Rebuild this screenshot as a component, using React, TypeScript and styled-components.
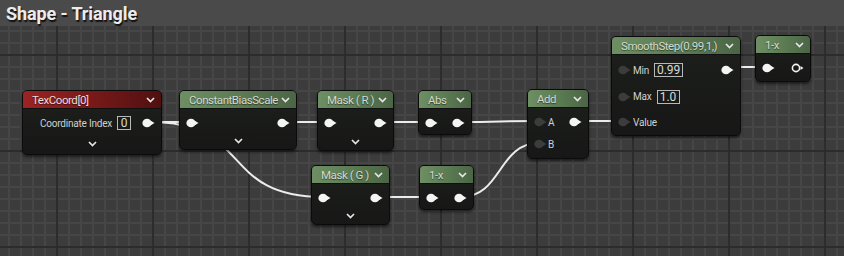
import { ReactNode } from "react";
import styled, { createGlobalStyle, css } from "styled-components";

const TOP = 26;

const GlobalStyle = createGlobalStyle`
  html, body {
    margin: 0;
    padding: 0;
    background: #3d3d3d;
  }
  body {
    font-family: Roboto, "Noto Sans", sans-serif;
  }
`;

const Page = styled.div`
  width: 844px;
  height: 256px;
  display: flex;
  flex-direction: column;
  overflow: hidden;
  background-color: #3c3c3c;
  background-image:
    linear-gradient(to right, #2c2c2c 2px, transparent 2px),
    linear-gradient(to bottom, #2c2c2c 2px, transparent 2px),
    linear-gradient(to right, #464646 2px, transparent 2px),
    linear-gradient(to bottom, #464646 2px, transparent 2px);
  background-size: 96px 96px, 96px 96px, 12px 12px, 12px 12px;
  background-position: 56px 0, 0 54px, 8px 0, 0 6px;
`;

const TitleBar = styled.div`
  height: ${TOP}px;
  flex-shrink: 0;
  display: flex;
  align-items: center;
  padding-left: 6px;
  background: #4a4a4a;
  color: #ececec;
  font-size: 18px;
  font-weight: 700;
  letter-spacing: -0.1px;
  text-shadow: 1px 2px 1px #111;
`;

const Canvas = styled.div`
  position: relative;
  flex: 1;
`;

const Wires = styled.svg`
  position: absolute;
  left: 0;
  top: 0;
`;

const NodeBox = styled.div<{ $x: number; $y: number; $w: number }>`
  position: absolute;
  left: ${({ $x }) => $x}px;
  top: ${({ $y }) => $y - TOP}px;
  width: ${({ $w }) => $w}px;
  box-sizing: border-box;
  border: 1px solid #0b0b0b;
  border-radius: 5px;
  background: linear-gradient(to bottom, #1e201d, #161716);
  box-shadow: 0 2px 3px rgba(0, 0, 0, 0.55);
  overflow: hidden;
  color: #d2d2d2;
  font-size: 10px;
  letter-spacing: -0.2px;
`;

const Header = styled.div<{ $red?: boolean }>`
  height: 17px;
  display: flex;
  align-items: center;
  justify-content: space-between;
  padding: 0 6px 0 9px;
  color: #d3d9d0;
  font-size: 11.5px;
  letter-spacing: -0.45px;
  white-space: nowrap;
  text-shadow: 0 1px 1px rgba(0, 0, 0, 0.5);
  border-bottom: 1px solid #101010;
  ${({ $red }) =>
    $red
      ? css`
          background: linear-gradient(to right, #9c2323, #751818 55%, #501010);
          color: #e6dede;
        `
      : css`
          background: linear-gradient(to right, #6e8f64, #5a7a52 55%, #4b6545);
        `}
`;

const Body = styled.div<{ $pt: number; $pb: number }>`
  display: flex;
  flex-direction: column;
  padding: ${({ $pt, $pb }) => `${$pt}px 0 ${$pb}px`};
`;

const Row = styled.div<{ $h: number }>`
  height: ${({ $h }) => $h}px;
  display: flex;
  align-items: center;
  padding: 0 5px 0 6px;
  white-space: nowrap;
`;

const Spacer = styled.div`
  flex: 1;
`;

const Label = styled.span<{ $ml?: number }>`
  margin-left: ${({ $ml }) => $ml ?? 0}px;
  color: #d0d0d0;
`;

const ValueBox = styled.span<{ $w: number }>`
  display: inline-flex;
  align-items: center;
  justify-content: center;
  box-sizing: border-box;
  width: ${({ $w }) => $w}px;
  height: 14px;
  margin-left: 5px;
  border: 1px solid #b8b8b8;
  color: #dadada;
  font-size: 12px;
  letter-spacing: 0;
`;

const Footer = styled.div<{ $h: number }>`
  height: ${({ $h }) => $h}px;
  display: flex;
  align-items: center;
  justify-content: center;
`;

const Chevron = ({ color = "#e6e6e6" }: { color?: string }) => (
  <svg width="9" height="6" viewBox="0 0 9 6">
    <polyline points="1,1 4.5,4.5 8,1" fill="none" stroke={color} strokeWidth="1.7" />
  </svg>
);

type PinKind = "on" | "off" | "ring";

const Pin = ({ kind = "on" }: { kind?: PinKind }) => {
  if (kind === "ring")
    return (
      <svg width="14" height="10" viewBox="0 0 14 10">
        <circle cx="5" cy="5" r="3.6" fill="none" stroke="#f2f2f2" strokeWidth="1.6" />
        <polygon points="9.5,3 12.5,5 9.5,7" fill="#f2f2f2" />
      </svg>
    );
  const fill = kind === "on" ? "#f4f4f4" : "#3c3c3c";
  return (
    <svg width="14" height="10" viewBox="0 0 14 10">
      <ellipse cx="5" cy="5" rx="4.6" ry="4.3" fill={fill} />
      <polygon points="8.5,2.5 12.5,5 8.5,7.5" fill={fill} />
    </svg>
  );
};

interface NodeProps {
  title: string;
  x: number;
  y: number;
  w: number;
  red?: boolean;
  pt?: number;
  pb?: number;
  footer?: number;
  children: ReactNode;
}

const Node = ({ title, x, y, w, red, pt = 3, pb = 2, footer, children }: NodeProps) => (
  <NodeBox $x={x} $y={y} $w={w}>
    <Header $red={red}>
      <span>{title}</span>
      <Chevron />
    </Header>
    <Body $pt={pt} $pb={footer ? 0 : pb}>
      {children}
      {footer && (
        <Footer $h={footer}>
          <Chevron />
        </Footer>
      )}
    </Body>
  </NodeBox>
);

const PassRow = ({ out = "on" as PinKind }) => (
  <Row $h={20}>
    <Pin />
    <Spacer />
    <Pin kind={out} />
  </Row>
);

const wires = [
  "M150,122 C168,122 170,122 190,122",
  "M150,122 C253,122 219,197 323,197",
  "M285,122 L328,122",
  "M382,122 L430,122",
  "M460,122 C500,122 500,121 539,121",
  "M577,121 L623,121",
  "M377,197 L430,197",
  "M461,197 C502,197 498,143 539,143",
  "M729,67 L767,67",
];

export default function App() {
  return (
    <Page>
      <GlobalStyle />
      <TitleBar>Shape - Triangle</TitleBar>
      <Canvas>
        <Wires width="844" height={256 - TOP} viewBox={`0 ${TOP} 844 ${256 - TOP}`}>
          {wires.map((d) => (
            <path key={d} d={d} fill="none" stroke="#ececec" strokeWidth="2" />
          ))}
        </Wires>

        <Node title="TexCoord[0]" x={22} y={90} w={140} red pt={4} footer={21}>
          <Row $h={20}>
            <Spacer />
            <Label>Coordinate Index</Label>
            <ValueBox $w={14}>0</ValueBox>
            <Spacer />
            <Pin />
          </Row>
        </Node>

        <Node title="ConstantBiasScale" x={179} y={90} w={118} pt={4} footer={16}>
          <PassRow />
        </Node>

        <Node title="Mask ( R )" x={317} y={90} w={77} pt={4} footer={17}>
          <PassRow />
        </Node>

        <Node title="Abs" x={418} y={90} w={54} pt={4} pb={1}>
          <PassRow />
        </Node>

        <Node title="Add" x={527} y={89} w={62} pt={3} pb={3}>
          <Row $h={22}>
            <Pin kind="off" />
            <Label $ml={0}>A</Label>
            <Spacer />
            <Pin />
          </Row>
          <Row $h={22}>
            <Pin kind="off" />
            <Label $ml={0}>B</Label>
          </Row>
        </Node>

        <Node title="SmoothStep(0.99,1,)" x={611} y={36} w={130} pt={2} pb={1}>
          <Row $h={26}>
            <Pin kind="off" />
            <Label $ml={1}>Min</Label>
            <ValueBox $w={29}>0.99</ValueBox>
            <Spacer />
            <Pin />
          </Row>
          <Row $h={27}>
            <Pin kind="off" />
            <Label $ml={1}>Max</Label>
            <ValueBox $w={23}>1.0</ValueBox>
          </Row>
          <Row $h={24}>
            <Pin kind="off" />
            <Label $ml={1}>Value</Label>
          </Row>
        </Node>

        <Node title="1-x" x={755} y={35} w={56} pt={4} pb={3}>
          <PassRow out="ring" />
        </Node>

        <Node title="Mask ( G )" x={311} y={165} w={79} pt={4} footer={16}>
          <PassRow />
        </Node>

        <Node title="1-x" x={419} y={165} w={55} pt={4} pb={1}>
          <PassRow />
        </Node>
      </Canvas>
    </Page>
  );
}
